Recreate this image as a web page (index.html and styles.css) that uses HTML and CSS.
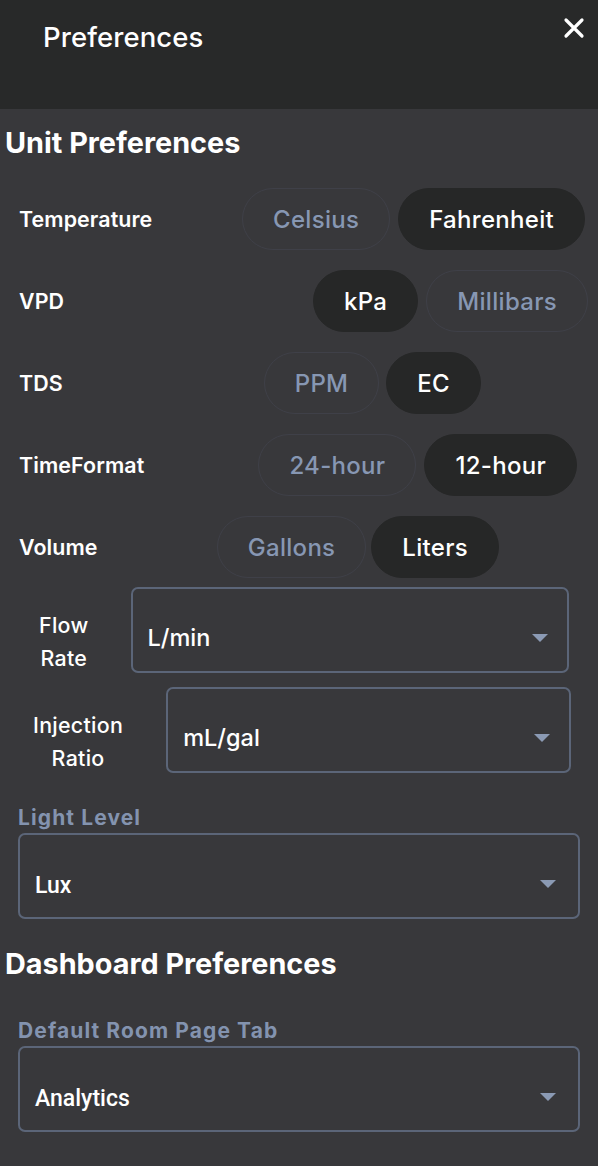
FILE: index.html
```html
<!DOCTYPE html>
<html lang="en">
<head>
<meta charset="utf-8">
<title>Preferences</title>
<link rel="stylesheet" href="styles.css">
</head>
<body>
<div class="drawer">
  <header class="header">
    <h1 class="header-title">Preferences</h1>
    <button class="close" aria-label="Close">
      <svg width="22" height="22" viewBox="0 0 22 22"><path d="M3 3 L19 19 M19 3 L3 19" stroke="#ffffff" stroke-width="3.2" stroke-linecap="round" fill="none"/></svg>
    </button>
  </header>
  <main class="content">
    <h2 class="section-title">Unit Preferences</h2>

    <div class="toggle-row row-temp">
      <span class="row-label">Temperature</span>
      <div class="group">
        <button class="pill">Celsius</button>
        <button class="pill selected">Fahrenheit</button>
      </div>
    </div>
    <div class="toggle-row row-vpd">
      <span class="row-label">VPD</span>
      <div class="group">
        <button class="pill selected">kPa</button>
        <button class="pill">Millibars</button>
      </div>
    </div>
    <div class="toggle-row row-tds">
      <span class="row-label">TDS</span>
      <div class="group">
        <button class="pill">PPM</button>
        <button class="pill selected">EC</button>
      </div>
    </div>
    <div class="toggle-row row-time">
      <span class="row-label">TimeFormat</span>
      <div class="group">
        <button class="pill">24-hour</button>
        <button class="pill selected">12-hour</button>
      </div>
    </div>
    <div class="toggle-row row-volume">
      <span class="row-label">Volume</span>
      <div class="group">
        <button class="pill">Gallons</button>
        <button class="pill selected">Liters</button>
      </div>
    </div>

    <div class="select-row row-flow">
      <span class="select-label">Flow<br>Rate</span>
      <div class="select"><span class="select-value">L/min</span><span class="arrow"></span></div>
    </div>
    <div class="select-row row-inject">
      <span class="select-label">Injection<br>Ratio</span>
      <div class="select"><span class="select-value">mL/gal</span><span class="arrow"></span></div>
    </div>

    <div class="field field-light">
      <label class="field-label">Light Level</label>
      <div class="select select-full"><span class="select-value roboto">Lux</span><span class="arrow"></span></div>
    </div>

    <h2 class="section-title section-dash">Dashboard Preferences</h2>

    <div class="field field-tab">
      <label class="field-label">Default Room Page Tab</label>
      <div class="select select-full"><span class="select-value roboto">Analytics</span><span class="arrow"></span></div>
    </div>
  </main>
</div>
</body>
</html>
```

FILE: styles.css
```css
* { box-sizing: border-box; }
html, body { margin: 0; padding: 0; }
body {
  background: #38383b;
  font-family: Inter, "Noto Sans", "DejaVu Sans", sans-serif;
  color: #ffffff;
  width: 598px;
  height: 1166px;
  overflow: hidden;
}
.drawer { width: 598px; min-height: 1166px; background: #38383b; }

.header {
  height: 109px;
  background: #282929;
  display: flex;
  justify-content: space-between;
  align-items: flex-start;
  padding: 20px 13px 0 43px;
}
.header-title {
  margin: 0;
  font-size: 27.5px;
  line-height: 34px;
  font-weight: 500;
  letter-spacing: 0.1px;
}
.close {
  background: none;
  border: 0;
  padding: 0;
  margin-top: -3px;
  width: 22px;
  height: 22px;
  cursor: pointer;
}
.close svg { display: block; }

.content { padding: 0; }

.section-title {
  margin: 0;
  padding-left: 5px;
  font-size: 28.8px;
  line-height: 34px;
  font-weight: 700;
}
.content > .section-title:first-child { padding-top: 17px; }

.toggle-row {
  display: flex;
  align-items: center;
  height: 62px;
  padding-left: 19px;
}
.row-temp { margin-top: 28px; }
.toggle-row + .toggle-row { margin-top: 20px; }

.row-label {
  font-size: 21.4px;
  font-weight: 600;
  letter-spacing: 0.1px;
}
.group {
  display: flex;
  gap: 8px;
  margin-left: auto;
}
.row-temp .group { margin-right: 13px; }
.row-vpd .group { margin-right: 10px; }
.row-tds .group { margin-right: 117px; gap: 7px; }
.row-time .group { margin-right: 21px; }
.row-volume .group { margin-right: 99px; gap: 5px; }

.pill {
  height: 62px;
  padding: 0 30px;
  border-radius: 31px;
  border: 1px solid #3f4048;
  background: transparent;
  color: #8797b3;
  font-family: Inter, "Noto Sans", sans-serif;
  font-size: 24px;
  font-weight: 500;
  letter-spacing: 0.3px;
}
.pill.selected {
  background: #262727;
  border-color: #262727;
  color: #ffffff;
}

.select-row {
  display: flex;
  align-items: flex-end;
  padding-left: 20px;
}
.row-flow { margin-top: 9px; padding-right: 29px; }
.row-inject { margin-top: 14px; padding-right: 27px; }
.select-label {
  text-align: center;
  font-size: 21.4px;
  line-height: 33px;
  font-weight: 500;
  letter-spacing: 0.3px;
  margin-bottom: -2px;
}
.row-flow .select-label { padding: 0 19px; margin-right: 23px; }
.row-inject .select-label { padding: 0 13px; margin-right: 30px; }

.select {
  flex: 1;
  height: 86px;
  border: 2px solid #5b6578;
  border-radius: 7px;
  display: flex;
  align-items: center;
  padding: 16px 19px 0 15px;
}
.select-value {
  flex: 1;
  font-size: 23.5px;
  line-height: 28px;
  font-weight: 500;
}
.select-value.roboto {
  font-family: Roboto, "Liberation Sans", sans-serif;
  font-size: 23px;
  font-weight: 500;
}
.select-full {
  flex: none;
  width: 100%;
  padding: 19px 22px 0 15px;
}
.arrow {
  width: 0;
  height: 0;
  border-left: 8px solid transparent;
  border-right: 8px solid transparent;
  border-top: 8px solid #8b9ab4;
}
.select-full .arrow { margin-top: -3px; }

.field { padding: 0 18px; }
.field-light { margin-top: 33px; }
.field-tab { margin-top: 38px; }
.field-label {
  display: block;
  font-family: Inter, Roboto, "Liberation Sans", sans-serif;
  font-size: 21px;
  line-height: 24px;
  font-weight: 700;
  letter-spacing: 1.1px;
  color: #8393af;
  margin-bottom: 3px;
}
.section-dash { margin-top: 28px; }
```
